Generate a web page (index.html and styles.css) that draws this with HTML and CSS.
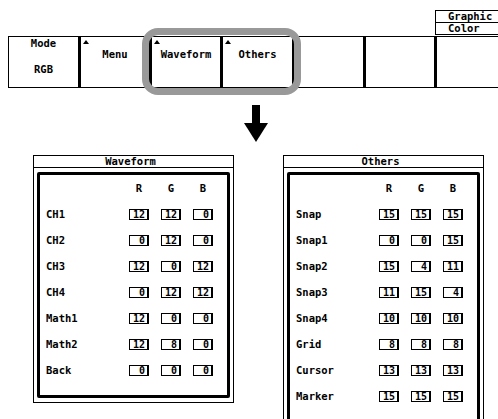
FILE: index.html
```html
<!DOCTYPE html>
<html lang="en">
<head>
    <meta charset="UTF-8">
    <title>Graphic Color | RGB</title>
    <meta name="viewport" content="width=device-width, initial-scale=1.0">
    <link rel="stylesheet" href="styles.css">
</head>
<body>
    <div class="screen">
        <!-- menu title in the upper right corner -->
        <div class="top">
            <div class="menu-title">
                <div class="menu-title-row">Graphic</div>
                <div class="menu-title-row">Color</div>
            </div>
        </div>

        <!-- soft keys -->
        <div class="keys">
            <div class="key key-first">
                <span class="key-top">Mode</span>
                <span class="key-value">RGB</span>
            </div>
            <div class="key">
                <span class="tri"></span>
                <span class="key-label">Menu</span>
            </div>
            <div class="key">
                <span class="tri"></span>
                <span class="key-label">Waveform</span>
            </div>
            <div class="key key-wide">
                <span class="tri"></span>
                <span class="key-label">Others</span>
            </div>
            <div class="key"></div>
            <div class="key"></div>
            <div class="key key-last"></div>
        </div>

        <div class="highlight"></div>

        <div class="arrow">
            <svg width="24" height="37" viewBox="0 0 24 37">
                <rect x="8" y="0" width="8" height="19" fill="#000"/>
                <polygon points="0,18 24,18 12,37" fill="#000"/>
            </svg>
        </div>

        <!-- the two setting dialogs -->
        <div class="panels">
            <div class="panel panel-left">
                <div class="panel-title"><span class="title-text">Waveform</span></div>
                <div class="panel-body">
                    <div class="grid-box">
                        <div class="grid">
                            <span></span><span class="head">R</span><span class="head">G</span><span class="head">B</span>

                            <span class="label">CH1</span><span class="val">12</span><span class="val">12</span><span class="val">0</span>
                            <span class="label">CH2</span><span class="val">0</span><span class="val">12</span><span class="val">0</span>
                            <span class="label">CH3</span><span class="val">12</span><span class="val">0</span><span class="val">12</span>
                            <span class="label">CH4</span><span class="val">0</span><span class="val">12</span><span class="val">12</span>
                            <span class="label">Math1</span><span class="val">12</span><span class="val">0</span><span class="val">0</span>
                            <span class="label">Math2</span><span class="val">12</span><span class="val">8</span><span class="val">0</span>
                            <span class="label">Back</span><span class="val">0</span><span class="val">0</span><span class="val">0</span>
                        </div>
                    </div>
                </div>
            </div>

            <div class="panel panel-right">
                <div class="panel-title"><span class="title-text">Others</span></div>
                <div class="panel-body">
                    <div class="grid-box">
                        <div class="grid">
                            <span></span><span class="head">R</span><span class="head">G</span><span class="head">B</span>

                            <span class="label">Snap</span><span class="val">15</span><span class="val">15</span><span class="val">15</span>
                            <span class="label">Snap1</span><span class="val">0</span><span class="val">0</span><span class="val">15</span>
                            <span class="label">Snap2</span><span class="val">15</span><span class="val">4</span><span class="val">11</span>
                            <span class="label">Snap3</span><span class="val">11</span><span class="val">15</span><span class="val">4</span>
                            <span class="label">Snap4</span><span class="val">10</span><span class="val">10</span><span class="val">10</span>
                            <span class="label">Grid</span><span class="val">8</span><span class="val">8</span><span class="val">8</span>
                            <span class="label">Cursor</span><span class="val">13</span><span class="val">13</span><span class="val">13</span>
                            <span class="label">Marker</span><span class="val">15</span><span class="val">15</span><span class="val">15</span>
                        </div>
                    </div>
                </div>
            </div>
        </div>
    </div>
</body>
</html>
```

FILE: styles.css
```css
* {
    box-sizing: border-box;
}

body {
    margin: 0;
    background: #fff;
    color: #000;
    font-family: "DejaVu Sans Mono", "Liberation Mono", monospace;
    font-weight: bold;
    font-size: 10.5px;
    height: 419px;
    overflow: hidden;
}

.screen {
    position: relative;
    width: 498px;
    height: 419px;
}

/* upper right title */
.top {
    height: 36px;
    padding-top: 10px;
    padding-left: 435px;
}

.menu-title {
    border-top: 1px solid #000;
    border-left: 1px solid #000;
}

.menu-title-row {
    height: 12px;
    line-height: 11px;
    padding-left: 12px;
    border-bottom: 1px solid #000;
}

/* soft keys */
.keys {
    display: flex;
    height: 52px;
    margin-left: 8px;
    border-top: 1px solid #000;
    border-bottom: 1px solid #000;
}

.key {
    width: 71px;
    border-left: 3px solid #000;
    display: flex;
    flex-direction: column;
    align-items: center;
}

.key-first {
    width: 70px;
    border-left: 1px solid #000;
}

.key-wide {
    width: 72px;
}

.key-last {
    flex: 1;
}

.key-top {
    line-height: 12px;
}

.key-value {
    margin-top: 14px;
    line-height: 12px;
}

.tri {
    align-self: flex-start;
    width: 0;
    height: 0;
    margin: 3px 0 0 2px;
    border-left: 3px solid transparent;
    border-right: 3px solid transparent;
    border-bottom: 4px solid #000;
}

.key-label {
    margin-top: 4px;
    line-height: 12px;
}

.highlight {
    position: absolute;
    left: 142px;
    top: 28px;
    width: 159px;
    height: 67px;
    border: 7px solid #999;
    border-radius: 16px;
}

.arrow {
    height: 67px;
    padding-top: 17px;
    padding-left: 244px;
}

.arrow svg {
    display: block;
}

/* dialogs */
.panels {
    display: flex;
    align-items: flex-start;
    gap: 49px;
    padding-left: 33px;
}

.panel {
    width: 201px;
    border: 1px solid #000;
}

.panel-right {
    border-bottom: none;
}

.panel-title {
    height: 12px;
    line-height: 11px;
    text-align: center;
    border-bottom: 1px solid #000;
}

.title-text {
    padding-right: 6px;
    border-bottom: 1px solid #000;
}

.panel-body {
    padding: 4px 3px 4px;
}

.grid-box {
    border: 3px solid #000;
    border-radius: 2px;
    padding: 0 0 12px 6px;
}

.grid {
    display: grid;
    grid-template-columns: 71px 20px 20px 20px;
    grid-auto-rows: 26px;
    column-gap: 12px;
    align-items: center;
}

.head {
    justify-self: center;
}

.label {
    line-height: 12px;
}

.val {
    height: 11px;
    line-height: 9px;
    font-size: 10px;
    text-align: right;
    padding-right: 2px;
    border-top: 1px solid #000;
    border-left: 1px solid #000;
    border-right: 2px solid #000;
    border-bottom: 1px solid #000;
}
```
